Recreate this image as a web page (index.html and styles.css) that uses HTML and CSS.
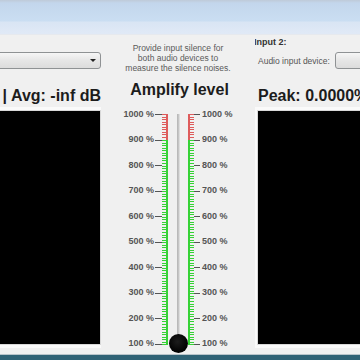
FILE: index.html
```html
<!DOCTYPE html>
<html lang="en">
<head>
  <meta charset="UTF-8">
  <title>Audio Calibration</title>
  <link rel="stylesheet" href="styles.css">
</head>
<body>
  <div class="titlebar"></div>

  <div class="main">
    <!-- Input 1 (cut off on the left) -->
    <div class="input-col left">
      <div class="combo combo-left"><span class="arrow"></span></div>
      <div class="stats stats-left"><span>Peak: 0.0000% | Avg: -inf dB</span></div>
      <div class="scope"></div>
    </div>

    <!-- Amplify level -->
    <div class="amp-col">
      <p class="hint">Provide input silence for<br>both audio devices to<br>measure the silence noises.</p>
      <h2 class="amp-title">Amplify level</h2>
      <div class="scale">
        <div class="labels labels-left">
          <span>1000 %</span><span>900 %</span><span>800 %</span><span>700 %</span><span>600 %</span>
          <span>500 %</span><span>400 %</span><span>300 %</span><span>200 %</span><span>100 %</span>
        </div>
        <div class="ticks ticks-left">
          <div class="major"></div>
          <div class="minor"><div class="red"></div><div class="green"></div></div>
        </div>
        <div class="track">
          <div class="rail"></div>
          <div class="knob"></div>
        </div>
        <div class="ticks ticks-right">
          <div class="minor"><div class="red"></div><div class="green"></div></div>
          <div class="major"></div>
        </div>
        <div class="labels labels-right">
          <span>1000 %</span><span>900 %</span><span>800 %</span><span>700 %</span><span>600 %</span>
          <span>500 %</span><span>400 %</span><span>300 %</span><span>200 %</span><span>100 %</span>
        </div>
      </div>
    </div>

    <!-- Input 2 -->
    <div class="input-col right">
      <div class="group-title">Input 2:</div>
      <div class="device-row">
        <span class="device-label">Audio input device:</span>
        <div class="combo combo-right"></div>
      </div>
      <div class="stats stats-right"><span>Peak: 0.0000% | Avg: -inf dB</span></div>
      <div class="scope"></div>
    </div>
  </div>

  <div class="taskbar"></div>
</body>
</html>
```

FILE: styles.css
```css
/* Window frame */
body {
  margin: 0;
  width: 360px;
  height: 360px;
  overflow: hidden;
  background-color: #f0f0f0;
  font-family: "Liberation Sans", Arial, sans-serif;
  display: flex;
  flex-direction: column;
}

.titlebar {
  height: 34px;
  flex-shrink: 0;
  background: linear-gradient(to bottom, #bfcad8 0, #c3d6ec 3px, #cadef2 21px, #d9e5f4 22px, #e0e9f6 33px);
  border-bottom: 1px solid #e6e9ee;
}

.main {
  flex: 1;
  display: grid;
  grid-template-columns: 101px 154px 105px;
  overflow: hidden;
}

.taskbar {
  height: 5px;
  flex-shrink: 0;
  border-top: 1px solid #b8c4ca;
  background-color: #2f6275;
}

/* Input columns */
.input-col {
  display: flex;
  flex-direction: column;
  overflow: hidden;
}

.input-col.left {
  padding-top: 17px;
}

.combo {
  height: 17px;
  box-sizing: border-box;
  border: 1px solid #8f9294;
  border-radius: 3px;
  background: linear-gradient(to bottom, #f6f6f6, #e6e6e6 50%, #dcdcdc);
  position: relative;
}

.combo-left {
  margin-left: -20px;
}

.arrow {
  position: absolute;
  right: 4px;
  top: 6px;
  border-left: 3px solid transparent;
  border-right: 3px solid transparent;
  border-top: 3px solid #222;
}

.stats {
  display: flex;
  margin-top: 17.5px;
  height: 18px;
  line-height: 18px;
  font-size: 16px;
  font-weight: bold;
  color: #1c1c1c;
  white-space: nowrap;
  overflow: hidden;
}

.stats-left {
  justify-content: flex-end;
}

.stats-right {
  padding-left: 3px;
}

.scope {
  margin-top: 6.5px;
  height: 233px;
  background-color: #000;
  box-shadow: 0 0 0 1px #d8d8d8, 0 0 0 4px #fafafa;
}

.input-col.left .scope {
  margin-right: 1px;
}

.input-col.right .scope {
  margin-left: 3px;
}

.group-title {
  margin-top: 2px;
  margin-left: -1px;
  height: 10px;
  line-height: 10px;
  font-size: 9px;
  font-weight: bold;
  color: #333;
}

.device-row {
  margin-top: 5px;
  padding-left: 3px;
  display: flex;
  align-items: center;
  gap: 5px;
}

.device-label {
  font-size: 8.5px;
  color: #555;
  white-space: nowrap;
}

.combo-right {
  flex: 1;
  margin-right: -20px;
}

/* Amplify column */
.amp-col {
  display: flex;
  flex-direction: column;
  align-items: center;
}

.hint {
  margin: 8px 0 0;
  font-size: 8.5px;
  line-height: 10px;
  color: #5a5a5a;
  text-align: center;
  white-space: nowrap;
}

.amp-title {
  margin: 7.5px 0 0;
  font-size: 16px;
  line-height: 18px;
  color: #1c1c1c;
  padding-left: 3px;
}

.scale {
  margin-top: 10px;
  display: flex;
}

.labels {
  width: 40px;
  height: 240px;
  display: flex;
  flex-direction: column;
  justify-content: space-between;
  font-size: 9px;
  line-height: 10px;
  font-weight: bold;
  color: #555;
  white-space: nowrap;
}

.labels-left {
  text-align: right;
  margin-right: 1px;
}

.labels-right {
  margin-left: 2px;
}

.ticks {
  margin-top: 5px;
  height: 231px;
  display: flex;
}

.ticks-left {
  width: 13px;
}

.ticks-right {
  width: 12px;
}

.major {
  flex: 1;
  background: repeating-linear-gradient(to bottom, #555 0 1px, transparent 1px 25.55px);
}

.minor {
  width: 6px;
  display: flex;
  flex-direction: column;
}

.minor .red {
  height: 26px;
  --c: #de5c5c;
}

.minor .green {
  flex: 1;
  --c: #36d236;
}

.ticks-left .minor > div {
  background:
    linear-gradient(to left, var(--c) 0 2px, transparent 2px),
    repeating-linear-gradient(to bottom, var(--c) 0 1px, transparent 1px 2.555px);
}

.ticks-right .minor > div {
  background:
    linear-gradient(to right, var(--c) 0 2px, transparent 2px),
    repeating-linear-gradient(to bottom, var(--c) 0 1px, transparent 1px 2.555px);
}

.track {
  width: 20px;
  margin-top: 5px;
  height: 231px;
  position: relative;
  display: flex;
  justify-content: center;
}

.rail {
  width: 3px;
  height: 226px;
  background: linear-gradient(to right, #b4b4b4, #c9c9c9 60%, #ececec);
}

.knob {
  position: absolute;
  left: 0.5px;
  top: 220px;
  width: 19px;
  height: 19px;
  border-radius: 50%;
  background: radial-gradient(circle at 45% 40%, #1c1c1c, #000 70%);
}
```
